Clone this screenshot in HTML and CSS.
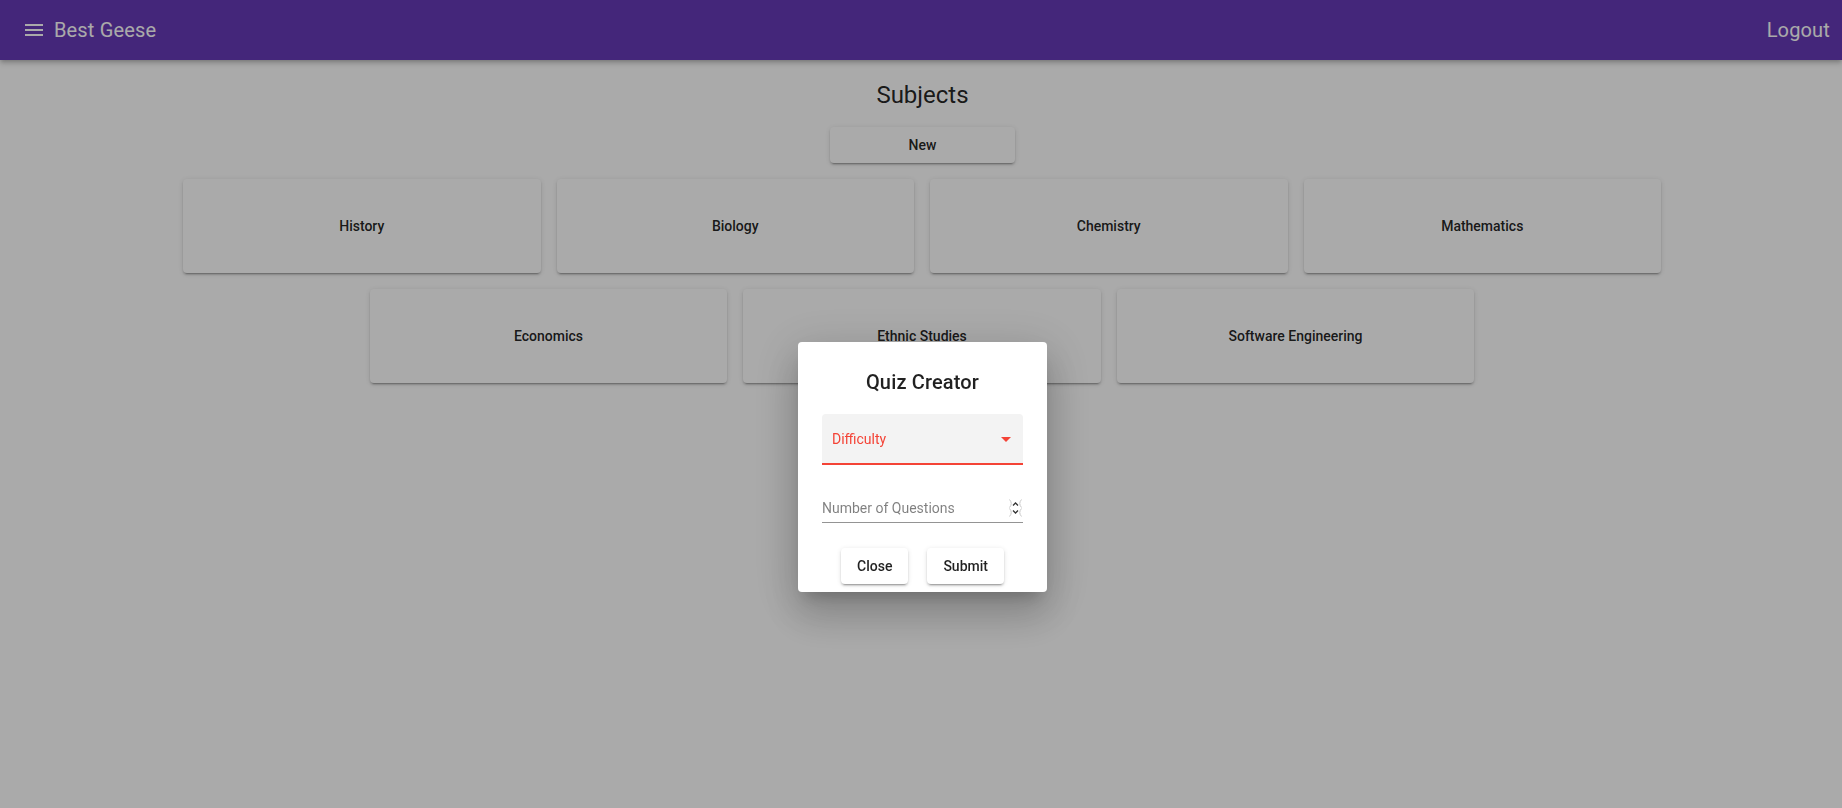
FILE: index.html
```html
<!DOCTYPE html>
<html lang="en">
<head>
<meta charset="utf-8">
<title>Best Geese</title>
<link rel="stylesheet" href="styles.css">
</head>
<body>
<header class="appbar">
  <div class="brand">
    <svg class="menu-icon" viewBox="0 0 24 24" width="24" height="24"><path d="M3 18h18v-2H3v2zm0-5h18v-2H3v2zm0-7v2h18V6H3z" fill="currentColor"/></svg>
    <span class="brand-name">Best Geese</span>
  </div>
  <span class="logout">Logout</span>
</header>
<main class="content">
  <h1 class="title">Subjects</h1>
  <button class="new-btn">New</button>
  <div class="cards">
    <div class="card">History</div>
    <div class="card">Biology</div>
    <div class="card">Chemistry</div>
    <div class="card">Mathematics</div>
    <div class="card">Economics</div>
    <div class="card">Ethnic Studies</div>
    <div class="card">Software Engineering</div>
  </div>
</main>
<div class="backdrop">
  <div class="dialog">
    <h2 class="dialog-title">Quiz Creator</h2>
    <div class="select">
      <span class="select-label">Difficulty</span>
      <svg class="select-arrow" viewBox="0 0 10 5" width="10" height="5"><path d="M0 0h10L5 5z" fill="#f44336"/></svg>
    </div>
    <div class="number-field">
      <span class="number-label">Number of Questions</span>
      <svg class="spinner" viewBox="0 0 15 18" width="15" height="18">
        <path d="M1.5 0.5q3.5 4 0 8M13.5 0.5q-3.5 4 0 8M1.5 9.5q3.5 4 0 8M13.5 9.5q-3.5 4 0 8" stroke="#c8c8c8" fill="none" stroke-width="1"/>
        <path d="M5 6.5l2.5-2.5L10 6.5" stroke="#333" fill="none" stroke-width="1.3"/>
        <path d="M5 11.5l2.5 2.5L10 11.5" stroke="#333" fill="none" stroke-width="1.3"/>
      </svg>
    </div>
    <div class="actions">
      <button class="action-btn">Close</button>
      <button class="action-btn">Submit</button>
    </div>
  </div>
</div>
</body>
</html>
```

FILE: styles.css
```css
* { box-sizing: border-box; }
html, body { margin: 0; padding: 0; }
body {
  font-family: Roboto, "Liberation Sans", Arial, sans-serif;
  background: #ffffff;
  color: rgba(0,0,0,0.87);
  width: 1842px;
  height: 808px;
  overflow: hidden;
}
.appbar {
  height: 60px;
  background: #673ab7;
  color: #ffffff;
  display: flex;
  align-items: center;
  justify-content: space-between;
  padding: 0 12px 0 22px;
  box-shadow: 0 2px 4px -1px rgba(0,0,0,0.2), 0 4px 5px 0 rgba(0,0,0,0.14);
}
.brand { display: flex; align-items: center; gap: 8px; }
.menu-icon { display: block; }
.brand-name, .logout { font-size: 20px; font-weight: 400; letter-spacing: 0.15px; }
.content {
  display: flex;
  flex-direction: column;
  align-items: center;
  padding-left: 3px;
}
.title {
  margin: 19px 0 0;
  font-size: 24px;
  font-weight: 400;
  line-height: 32px;
}
.new-btn {
  margin-top: 16px;
  width: 185px;
  height: 36px;
  border: none;
  border-radius: 4px;
  background: #ffffff;
  font-family: inherit;
  font-size: 14px;
  font-weight: 500;
  color: rgba(0,0,0,0.87);
  box-shadow: 0 3px 1px -2px rgba(0,0,0,0.2), 0 2px 2px 0 rgba(0,0,0,0.14), 0 1px 5px 0 rgba(0,0,0,0.12);
}
.cards {
  margin-top: 16px;
  margin-right: 1px;
  width: 1478px;
  display: flex;
  flex-wrap: wrap;
  justify-content: center;
  gap: 16px 16px;
}
.card {
  width: 357.5px;
  height: 94px;
  background: #ffffff;
  border-radius: 4px;
  display: flex;
  align-items: center;
  justify-content: center;
  font-size: 14px;
  font-weight: 500;
  box-shadow: 0 3px 1px -2px rgba(0,0,0,0.2), 0 2px 2px 0 rgba(0,0,0,0.14), 0 1px 5px 0 rgba(0,0,0,0.12);
}
.backdrop {
  position: fixed;
  inset: 0;
  background: rgba(0,0,0,0.333);
  display: flex;
  justify-content: center;
  align-items: flex-start;
  padding-top: 342px;
  padding-left: 3px;
}
.dialog {
  width: 249px;
  height: 250px;
  background: #ffffff;
  border-radius: 4px;
  padding: 24px 24px 8px;
  display: flex;
  flex-direction: column;
  box-shadow: 0 11px 15px -7px rgba(0,0,0,0.2), 0 24px 38px 3px rgba(0,0,0,0.14), 0 9px 46px 8px rgba(0,0,0,0.12);
}
.dialog-title {
  margin: 0;
  text-align: center;
  font-size: 20px;
  font-weight: 500;
  line-height: 32px;
  letter-spacing: 0.15px;
}
.select {
  margin-top: 16px;
  height: 51px;
  background: #f3f3f3;
  border-top-left-radius: 4px;
  border-top-right-radius: 4px;
  border-bottom: 2px solid #f44336;
  display: flex;
  align-items: center;
  justify-content: space-between;
  padding: 1px 12px 0 10px;
}
.select-label { color: #f44336; font-size: 14px; }
.select-arrow { display: block; }
.number-field {
  margin-top: 29px;
  height: 29px;
  border-bottom: 1px solid #949494;
  display: flex;
  align-items: flex-end;
  justify-content: space-between;
  padding-bottom: 4px;
}
.number-label { color: rgba(0,0,0,0.5); font-size: 14px; line-height: 16px; margin-bottom: 2px; }
.spinner { display: block; margin-bottom: 1px; }
.actions {
  margin-top: auto;
  display: flex;
  justify-content: center;
  gap: 19px;
}
.action-btn {
  height: 36px;
  padding: 0 16px;
  min-width: 64px;
  border: none;
  border-radius: 4px;
  background: #ffffff;
  font-family: inherit;
  font-size: 14px;
  font-weight: 500;
  color: rgba(0,0,0,0.87);
  box-shadow: 0 3px 1px -2px rgba(0,0,0,0.2), 0 2px 2px 0 rgba(0,0,0,0.14), 0 1px 5px 0 rgba(0,0,0,0.12);
}
```
